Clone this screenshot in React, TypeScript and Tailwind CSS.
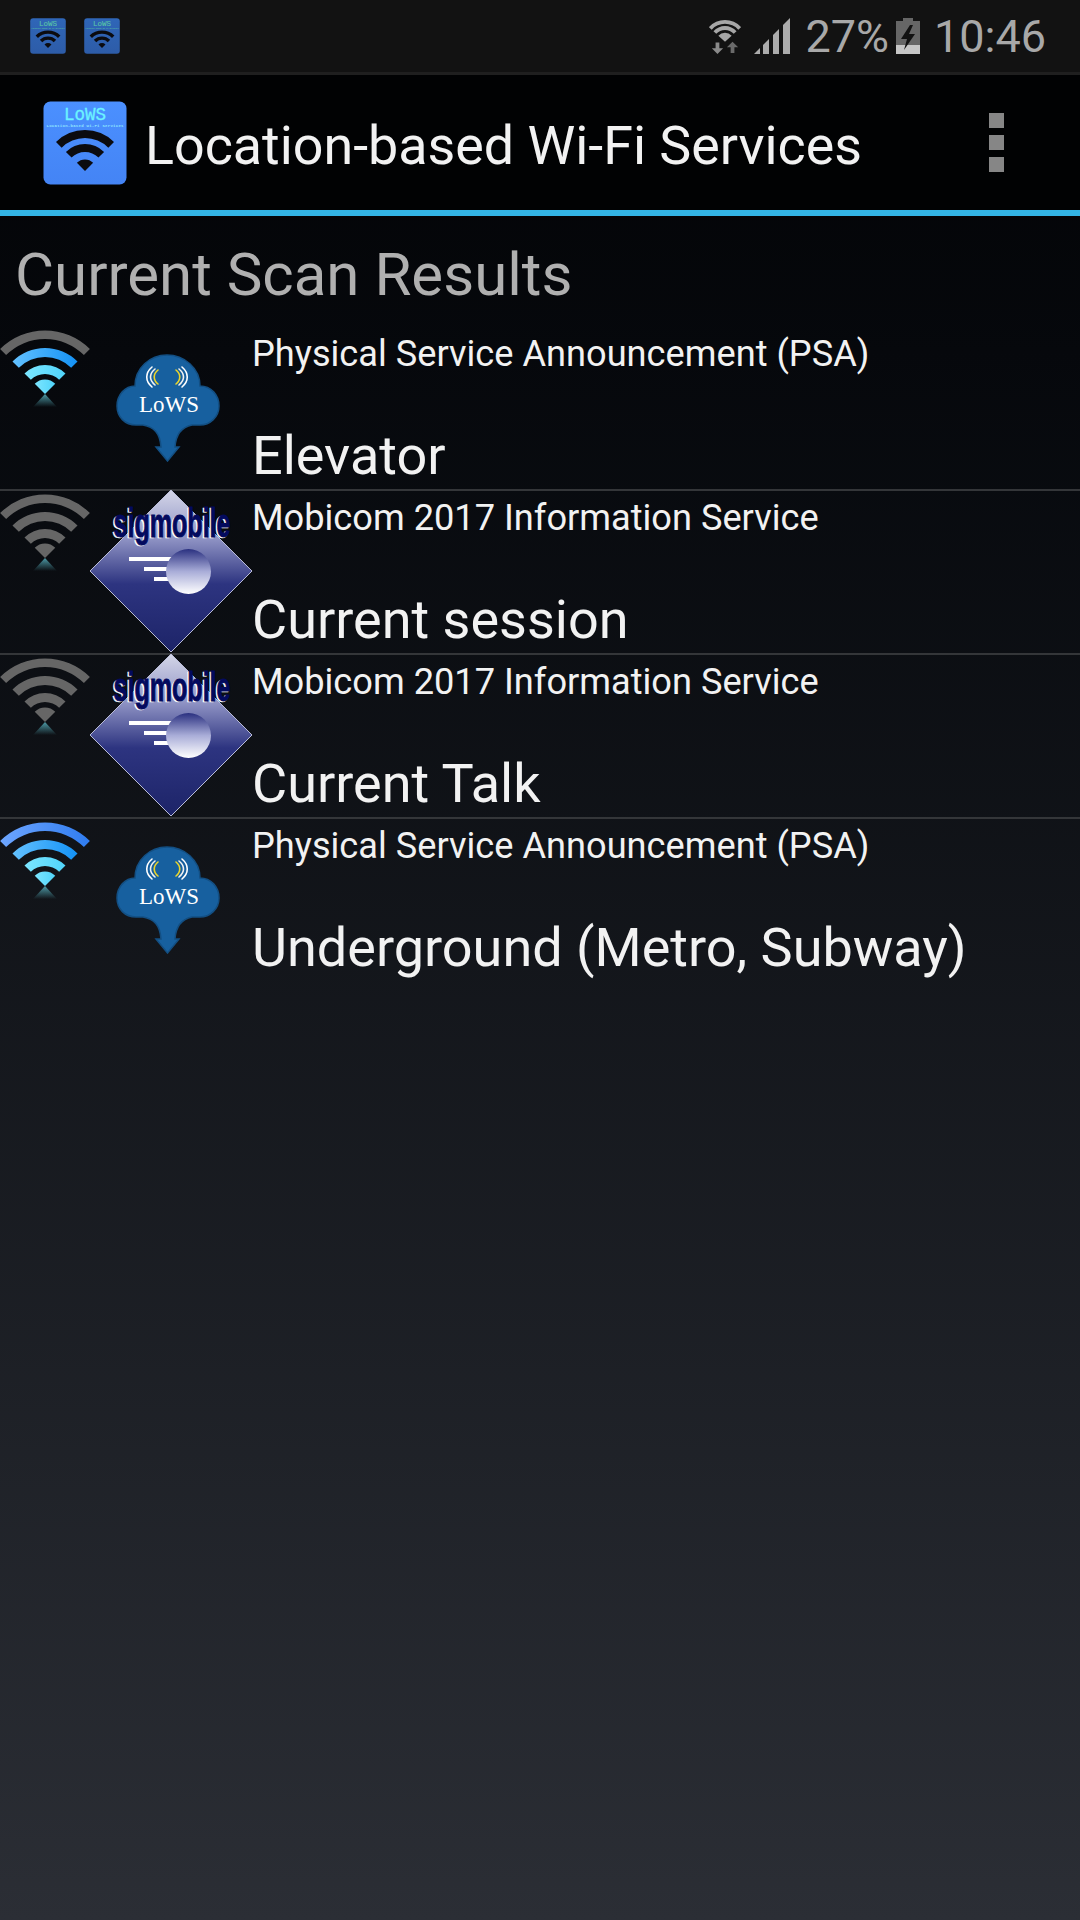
import React from "react";

const rad = (d: number) => (d * Math.PI) / 180;
function sector(cx: number, cy: number, r0: number, r1: number, a = 45) {
  const s = Math.sin(rad(a));
  const c = Math.cos(rad(a));
  const p = (r: number, sign: number) => `${(cx + sign * r * s).toFixed(2)} ${(cy - r * c).toFixed(2)}`;
  if (r0 <= 0) return `M${cx} ${cy}L${p(r1, -1)}A${r1} ${r1} 0 0 1 ${p(r1, 1)}Z`;
  return `M${p(r0, -1)}L${p(r1, -1)}A${r1} ${r1} 0 0 1 ${p(r1, 1)}L${p(r0, 1)}A${r0} ${r0} 0 0 0 ${p(r0, -1)}Z`;
}

function SignalWifi({ lit, id }: { lit: number; id: string }) {
  const radii: [number, number][] = [[55, 63.5], [37, 46], [20, 29], [0, 14.5]];
  const fills = [`url(#${id}wa)`, `url(#${id}wb)`, `url(#${id}wc)`, `url(#${id}wc)`];
  return (
    <svg width="90" height="100" viewBox="0 0 90 100" className="block">
      <defs>
        <linearGradient id={`${id}wa`} x1="0" y1="0" x2="1" y2="0">
          <stop offset="0" stopColor="#6ea6ff" />
          <stop offset="1" stopColor="#2f7cf0" />
        </linearGradient>
        <linearGradient id={`${id}wb`} x1="0" y1="0" x2="1" y2="0">
          <stop offset="0" stopColor="#63c1ff" />
          <stop offset="1" stopColor="#1492f5" />
        </linearGradient>
        <linearGradient id={`${id}wc`} x1="0" y1="0" x2="1" y2="0">
          <stop offset="0" stopColor="#7ce6ff" />
          <stop offset="1" stopColor="#50d4fa" />
        </linearGradient>
        <linearGradient id={`${id}wr`} x1="0" y1="0" x2="0" y2="1">
          <stop offset="0" stopColor="#4d9aa6" />
          <stop offset="1" stopColor="#4d9aa6" stopOpacity="0" />
        </linearGradient>
      </defs>
      {radii.map((r, i) => (
        <path key={i} d={sector(45, 64, r[0], r[1])} fill={i >= 4 - lit ? fills[i] : "#666666"} />
      ))}
      <path d="M45 64L33 77H57Z" fill={`url(#${id}wr)`} />
    </svg>
  );
}

function LowsLogo() {
  return (
    <svg width="104" height="108" viewBox="0 0 104 108" className="block">
      <path
        d="M19 32C19 14 34 1 51 1C68 1 84 14 84 32C95 32 103 41 103 52C103 63 94 71 84 71H76C66 73 60 79 59 93H63L51.500 107L40 93H45C44 79 38 73 27 71H20C9 71 1 63 1 52C1 41 9 32 19 32Z"
        fill="#17609f"
        stroke="#134f83"
        strokeWidth="1.5"
      />
      <g fill="none" strokeWidth="1.6" strokeLinecap="round">
        <path d="M36 13C29 19 29 27 36 33" stroke="#ffffff" />
        <path d="M39 15C33 20 33 26 39 31" stroke="#f2f2f2" />
        <path d="M42 16C37 20 37 26 42 30" stroke="#ecd52a" />
        <path d="M60 16C65 20 65 26 60 30" stroke="#ecd52a" />
        <path d="M63 15C69 20 69 26 63 31" stroke="#f2f2f2" />
        <path d="M66 13C73 19 73 27 66 33" stroke="#ffffff" />
      </g>
      <text x="53" y="58" textAnchor="middle" fontFamily="'Liberation Serif', serif" fontSize="23" fill="#ffffff">
        LoWS
      </text>
    </svg>
  );
}

function SigmobileLogo({ id }: { id: string }) {
  return (
    <svg width="162" height="162" viewBox="0 0 162 162" className="block">
      <defs>
        <linearGradient id={`${id}sd`} x1="0" y1="0" x2="0" y2="1">
          <stop offset="0" stopColor="#d4d6e8" />
          <stop offset="0.3" stopColor="#8f93c4" />
          <stop offset="0.58" stopColor="#2d3480" />
          <stop offset="1" stopColor="#1d2468" />
        </linearGradient>
        <linearGradient id={`${id}sb`} x1="0" y1="0" x2="0" y2="1">
          <stop offset="0" stopColor="#2a3080" />
          <stop offset="0.5" stopColor="#a9add8" />
          <stop offset="1" stopColor="#ffffff" />
        </linearGradient>
      </defs>
      <path d="M81 0L162 81L81 162L0 81Z" fill={`url(#${id}sd)`} stroke="#b9bcd8" strokeWidth="1" />
      <rect x="39" y="67" width="44" height="4" fill="#ffffff" />
      <rect x="54" y="77" width="30" height="4" fill="#ffffff" />
      <rect x="64" y="87" width="20" height="4" fill="#ffffff" />
      <circle cx="98.500" cy="81.500" r="22.500" fill={`url(#${id}sb)`} />
      <text transform="translate(80.500 48) scale(0.627 1)" textAnchor="middle" fontFamily="'Liberation Sans', sans-serif" fontWeight="700" fontSize="40" fill="#ffffff" stroke="#ffffff" strokeWidth="0.6">
        sigmobile
      </text>
      <text transform="translate(82 46.500) scale(0.627 1)" textAnchor="middle" fontFamily="'Liberation Sans', sans-serif" fontWeight="700" fontSize="40" fill="#030a5e" stroke="#030a5e" strokeWidth="1">
        sigmobile
      </text>
    </svg>
  );
}

function AppIcon({ size, dim }: { size: number; dim?: boolean }) {
  return (
    <svg width={size} height={size} viewBox="0 0 84 84" className="block">
      <defs>
        <linearGradient id={dim ? "appd" : "appb"} x1="0" y1="0" x2="0" y2="1">
          <stop offset="0" stopColor={dim ? "#2f66b8" : "#4b90ff"} />
          <stop offset="1" stopColor={dim ? "#2d5ca8" : "#4484f5"} />
        </linearGradient>
      </defs>
      <rect x="0.500" y="0.500" width="83" height="83" rx="7" fill={`url(#${dim ? "appd" : "appb"})`} />
      <text x="42" y="18.500" textAnchor="middle" fontFamily="'Liberation Mono', monospace" fontSize="17.500" stroke={dim ? "#58c0a8" : "#6cf3ff"} strokeWidth="0.3" fill={dim ? "#58c0a8" : "#6cf3ff"}>
        LoWS
      </text>
      <text x="42" y="25.500" textAnchor="middle" fontFamily="'Liberation Mono', monospace" fontWeight="700" fontSize="4" fill={dim ? "#58c0a8" : "#8fe6ff"} textLength="77">
        Location-based Wi-Fi Services
      </text>
      <path d={sector(42, 70, 33, 41)} fill="#0b0b0f" />
      <path d={sector(42, 70, 19, 27)} fill="#0b0b0f" />
      <path d={sector(42, 70, 0, 11.500)} fill="#0b0b0f" />
    </svg>
  );
}

function StatusWifi() {
  return (
    <svg width="32" height="38" viewBox="0 0 34 38" className="block">
      <g fill="#a6a6a6">
        <path d={sector(17, 25, 19, 23, 48)} />
        <path d={sector(17, 25, 12.500, 16.500, 48)} />
        <path d={sector(17, 25, 0, 9.500, 48)} />
      </g>
      <path d="M8 26V32H4L10 38L16 32H12V26Z" fill="#8a8a8a" transform="translate(-1 0)" />
      <path d="M26 38V32H30L24 26L18 32H22V38Z" fill="#6a6a6a" transform="translate(1 -1)" />
    </svg>
  );
}

function SignalBars() {
  return (
    <svg width="36" height="36" viewBox="0 0 36 36" className="block">
      <g fill="#ababab">
        <path d="M0 36L6 30V36Z" />
        <path d="M9 27L15 21V36H9Z" />
        <path d="M19 17L25 11V36H19Z" />
        <path d="M29 7L36 0V36H29Z" />
      </g>
    </svg>
  );
}

function Battery() {
  return (
    <svg width="24" height="36" viewBox="0 0 24 36" className="block">
      <path d="M7 0H17V3H24V36H0V3H7Z" fill="#666666" />
      <path d="M0 27H24V36H0Z" fill="#c6c6c6" />
      <path d="M14 7L5 21H11L8 32L19 16H13L17 7Z" fill="#121212" />
    </svg>
  );
}

function Row({
  id,
  lit,
  logo,
  sub,
  title,
  last,
}: {
  id: string;
  lit: number;
  logo: "lows" | "sig";
  sub: string;
  title: string;
  last?: boolean;
}) {
  return (
    <div className={`flex h-[164px] ${last ? "" : "border-b-2 border-[#343639]"}`}>
      <div className="w-[90px] shrink-0 pt-[3px]">
        <SignalWifi lit={lit} id={id} />
      </div>
      <div className="w-[162px] shrink-0 relative">
        {logo === "sig" ? (
          <div className="absolute left-0 top-[-1px] z-10">
            <SigmobileLogo id={id} />
          </div>
        ) : (
          <div className="pl-[26px] pt-[27px]">
            <LowsLogo />
          </div>
        )}
      </div>
      <div className="flex flex-col text-[#f2f2f2]">
        <div className="text-[36.200px] leading-[40px] mt-[7px] whitespace-nowrap">{sub}</div>
        <div className="text-[54px] leading-[60px] mt-[52px] whitespace-nowrap">{title}</div>
      </div>
    </div>
  );
}

export default function App() {
  return (
    <div className="w-[1080px] h-[1920px] overflow-hidden bg-linear-to-b from-[#020305] to-[#2b2e35] font-['Roboto',sans-serif]">
      <div className="h-[75px] bg-[#121212] border-b-[3px] border-[#1f1f1f] flex items-center justify-between pl-[30px] pr-[34px]">
        <div className="flex gap-[18px]">
          <AppIcon size={36} dim />
          <AppIcon size={36} dim />
        </div>
        <div className="flex items-center text-[#a8a8a8] text-[45px] leading-none">
          <StatusWifi />
          <div className="w-[13px]" />
          <SignalBars />
          <span className="ml-[15px]">27%</span>
          <div className="ml-[7px]">
            <Battery />
          </div>
          <span className="ml-[14px]">10:46</span>
        </div>
      </div>
      <div className="h-[135px] bg-[#010203] flex items-center pl-[43px] pr-[76px]">
        <AppIcon size={84} />
        <div className="ml-[18px] flex-1 text-[53.800px] leading-none text-[#f2f2f2] whitespace-nowrap pt-[7px]">
          Location-based Wi-Fi Services
        </div>
        <div className="flex flex-col gap-[7px]">
          <div className="w-[15px] h-[15px] bg-[#868686]" />
          <div className="w-[15px] h-[15px] bg-[#868686]" />
          <div className="w-[15px] h-[15px] bg-[#868686]" />
        </div>
      </div>
      <div className="h-[6px] bg-[#33b5e5]" />
      <div className="h-[111px] pl-[15px] pt-[24px] text-[60px] leading-[70px] text-[#b0b0b0] whitespace-nowrap">
        Current Scan Results
      </div>
      <Row id="r1" lit={3} logo="lows" sub="Physical Service Announcement (PSA)" title="Elevator" />
      <Row id="r2" lit={0} logo="sig" sub="Mobicom 2017 Information Service" title="Current session" />
      <Row id="r3" lit={0} logo="sig" sub="Mobicom 2017 Information Service" title="Current Talk" />
      <Row id="r4" lit={4} logo="lows" sub="Physical Service Announcement (PSA)" title="Underground (Metro, Subway)" last />
    </div>
  );
}
